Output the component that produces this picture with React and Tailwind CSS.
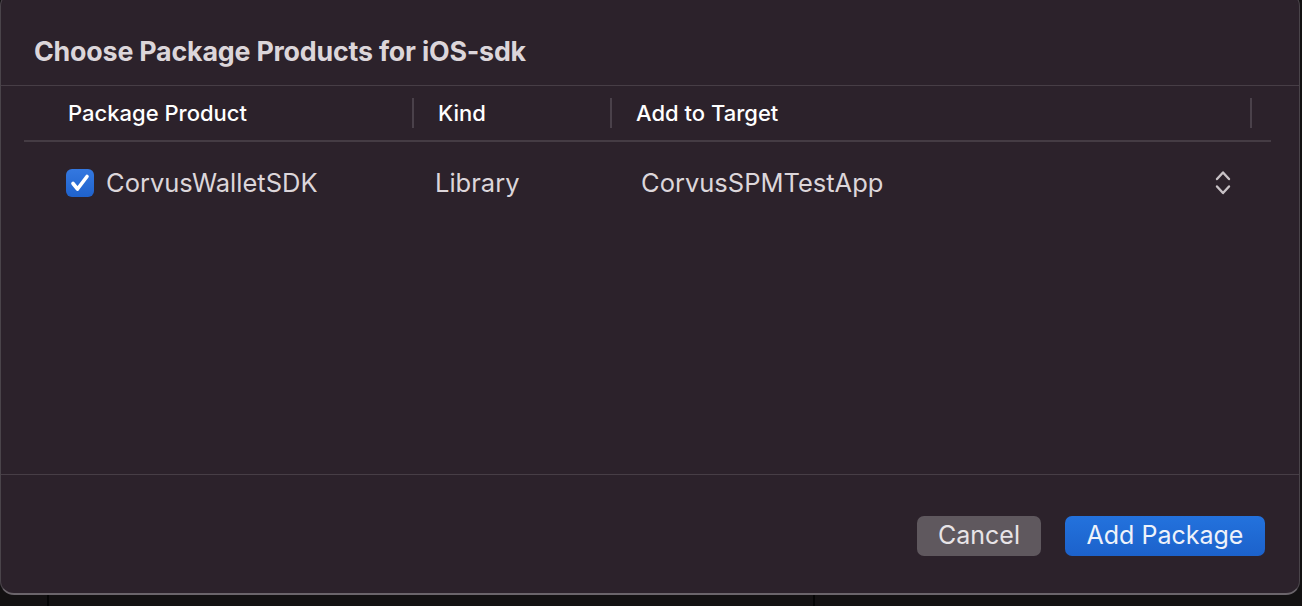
export default function App() {
	return (
		<div
			className="w-full h-[606px] overflow-hidden bg-[#131112] flex flex-col"
			style={{ fontFamily: "Inter, 'Noto Sans', sans-serif" }}
		>
			<div className="w-[1300px] h-[603px] mt-[-8px] shrink-0 flex flex-col bg-[#2c222b] rounded-[14px] border border-[#4a444a] border-b-2 border-b-[#6b656b]">
				<div className="h-[93px] shrink-0 flex items-end pb-[20px] pl-[33px] border-b border-[#473e46]">
					<h1 className="text-[26.8px] font-bold text-[#dcd6da] tracking-[-0.2px] leading-none">
						Choose Package Products for iOS-sdk
					</h1>
				</div>

				<div className="mx-[23px] mr-[28px] h-[56px] shrink-0 flex items-center border-b-2 border-[#453c44] text-[22px] font-medium text-white">
					<div className="w-[390px] pl-[44px] h-[30px] flex items-center border-r-2 border-[#4a414a]">
						Package Product
					</div>
					<div className="w-[198px] pl-[24px] h-[30px] flex items-center border-r-2 border-[#4a414a]">
						Kind
					</div>
					<div className="w-[640px] pl-[24px] h-[30px] flex items-center border-r-2 border-[#4a414a]">
						Add to Target
					</div>
				</div>

				<div className="flex-1 flex flex-col border-b border-[#473e46]">
					<div className="h-[82px] flex items-center text-[25.5px] text-[#dcd6da]">
						<div className="w-[408px] pl-[65px] flex items-center gap-[12px]">
							<span className="w-[28px] h-[28px] rounded-[6px] bg-gradient-to-b from-[#3478e0] to-[#1f62cc] flex items-center justify-center">
								<svg width="24" height="24" viewBox="0 0 24 24" fill="none">
									<path
										d="M5 12.5l4.5 5.5L19 5.5"
										stroke="white"
										strokeWidth="3.6"
										strokeLinecap="round"
										strokeLinejoin="round"
									/>
								</svg>
							</span>
							<span>CorvusWalletSDK</span>
						</div>
						<div className="w-[206px] pl-[26px]">Library</div>
						<div className="flex-1 pl-[26px]">CorvusSPMTestApp</div>
						<div className="w-[84px] flex items-center">
							<svg width="16" height="26" viewBox="0 0 16 26" fill="none">
								<path
									d="M2 9l6-6.5 6 6.5M2 16.5l6 6.5 6-6.5"
									stroke="#c8c2c6"
									strokeWidth="2.4"
									strokeLinecap="round"
									strokeLinejoin="round"
								/>
							</svg>
						</div>
					</div>
				</div>

				<div className="h-[118px] shrink-0 flex items-start justify-end gap-[24px] pt-[41px] pr-[34px]">
					<button className="w-[124px] h-[40px] rounded-[7px] bg-[#5f585e] text-[25px] text-[#e8e4e7]">
						Cancel
					</button>
					<button className="w-[200px] h-[40px] rounded-[7px] bg-gradient-to-b from-[#2372dd] to-[#1c62cb] text-[25px] text-[#eef2fa]">
						Add Package
					</button>
				</div>
			</div>

			<div className="flex-1 flex">
				<div className="w-[49px] border-r-2 border-[#050505]" />
				<div className="w-[766px] border-r-2 border-[#050505]" />
			</div>
		</div>
	);
}
